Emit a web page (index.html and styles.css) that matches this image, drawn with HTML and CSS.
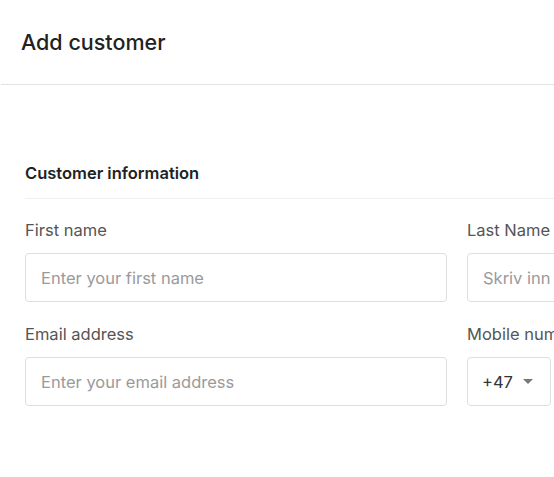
FILE: index.html
```html
<!DOCTYPE html>
<html lang="en">
<head>
    <meta charset="UTF-8">
    <meta name="viewport" content="width=device-width, initial-scale=1.0">
    <title>Add customer</title>
    <link rel="stylesheet" href="styles.css">
</head>
<body>
    <div class="modal">
        <header class="modal-header">
            <h1>Add customer</h1>
        </header>

        <div class="modal-body">
            <h2 class="section-title">Customer information</h2>

            <div class="form-grid">
                <div class="field">
                    <label for="firstName">First name</label>
                    <input type="text" id="firstName" placeholder="Enter your first name">
                </div>
                <div class="field">
                    <label for="lastName">Last Name</label>
                    <input type="text" id="lastName" placeholder="Skriv inn etternavn">
                </div>
                <div class="field">
                    <label for="email">Email address</label>
                    <input type="email" id="email" placeholder="Enter your email address">
                </div>
                <div class="field">
                    <label for="phone">Mobile number</label>
                    <div class="phone-row">
                        <div class="country-code">
                            <span>+47</span>
                            <span class="caret"></span>
                        </div>
                        <input type="tel" id="phone" placeholder="Enter mobile number">
                    </div>
                </div>
            </div>
        </div>
    </div>
</body>
</html>
```

FILE: styles.css
```css
/* Reset styles */
* {
    margin: 0;
    padding: 0;
    box-sizing: border-box;
}

body {
    font-family: Inter, "Noto Sans", sans-serif;
    background-color: #fff;
    color: #222;
    overflow: hidden;
}

.modal {
    width: 920px;
}

/* Header */
.modal-header {
    height: 85px;
    padding: 0 21px;
    display: flex;
    align-items: center;
    border-bottom: 1px solid #e2e2e2;
    margin-left: 1px;
}

.modal-header h1 {
    font-size: 21.5px;
    font-weight: 500;
    color: #222;
    margin-top: -1px;
    margin-left: -1px;
}

/* Body */
.modal-body {
    padding: 78px 25px 0;
}

.section-title {
    font-size: 16.5px;
    font-weight: 600;
    line-height: 20px;
    color: #222;
    padding-bottom: 15px;
    border-bottom: 1px solid #f0f0f0;
    margin-bottom: 21px;
}

.form-grid {
    display: grid;
    grid-template-columns: 422px 422px;
    column-gap: 20px;
    row-gap: 22px;
}

.field label {
    display: block;
    font-size: 16.5px;
    line-height: 20px;
    color: #555;
    margin-bottom: 13px;
}

.field input {
    width: 100%;
    height: 49px;
    padding: 0 15px;
    border: 1px solid #dedede;
    border-radius: 4px;
    font-family: inherit;
    font-size: 16.5px;
    color: #222;
    outline: none;
}

.field input::placeholder {
    color: #9a9a9a;
}

.phone-row {
    display: flex;
    gap: 10px;
}

.country-code {
    flex: 0 0 84px;
    height: 49px;
    border: 1px solid #dedede;
    border-radius: 4px;
    display: flex;
    align-items: center;
    padding-left: 14px;
    gap: 10px;
    font-size: 16.5px;
    color: #333;
}

.caret {
    width: 0;
    height: 0;
    border-left: 5px solid transparent;
    border-right: 5px solid transparent;
    border-top: 5px solid #777;
}
```
